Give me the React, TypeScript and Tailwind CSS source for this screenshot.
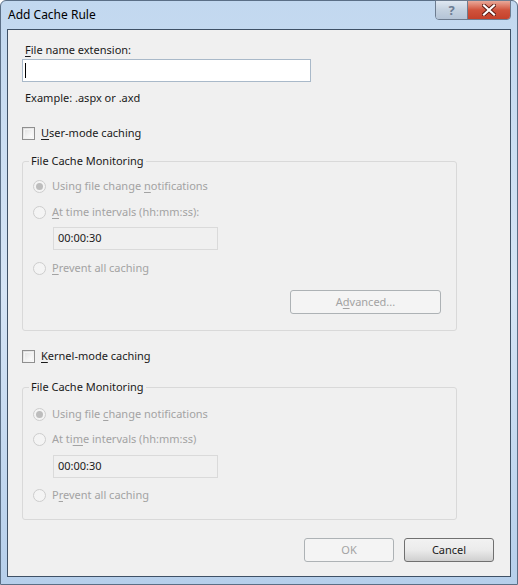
import React from "react";

const font = { fontFamily: '"Noto Sans", "Open Sans", sans-serif' };

function U({ children }: { children: React.ReactNode }) {
  return <span className="underline underline-offset-2 decoration-1">{children}</span>;
}

function Checkbox({ label }: { label: React.ReactNode }) {
  return (
    <div className="flex h-[16px] items-center gap-[6px]">
      <div className="h-[13px] w-[13px] border border-[#8f8f8f] bg-gradient-to-br from-[#dcdcdc] to-[#fbfbfb] p-[1px]">
        <div className="h-full w-full border border-[#f4f4f4] bg-gradient-to-br from-[#e4e4e4] to-[#fdfdfd]" />
      </div>
      <span className="text-[11px] leading-[16px] text-[#1a1a1a]">{label}</span>
    </div>
  );
}

function Radio({ label, checked, className = "" }: { label: React.ReactNode; checked?: boolean; className?: string }) {
  return (
    <div className={`flex h-[16px] items-center gap-[6px] ${className}`}>
      <div className="flex h-[13px] w-[13px] items-center justify-center rounded-full border border-[#cdcdcd] bg-[#f4f4f4]">
        {checked && <div className="h-[7px] w-[7px] rounded-full bg-[#bdbdbd]" />}
      </div>
      <span className="text-[11px] leading-[16px] text-[#a3a3a3]">{label}</span>
    </div>
  );
}

function TimeInput({ className = "" }: { className?: string }) {
  return (
    <div className={`ml-[20px] flex h-[23px] w-[165px] items-center border border-[#dadada] bg-[#f0f0f0] px-[4px] text-[11px] text-[#1a1a1a] ${className}`}>
      00:00:30
    </div>
  );
}

function Group({ children }: { children: React.ReactNode }) {
  return (
    <fieldset className="w-[435px] rounded-[3px] border border-[#d9d9d9] px-[10px] pb-[16px]">
      <legend className="ml-[-4px] px-[2px] text-[11px] leading-[16px] text-[#1a1a1a]">File Cache Monitoring</legend>
      {children}
    </fieldset>
  );
}

export default function App() {
  return (
    <div style={font} className="h-[585px] w-[518px] overflow-hidden bg-white">
      <div className="flex h-full w-full flex-col rounded-t-[6px] border border-[#5b6f86] bg-gradient-to-b from-[#c2d8ef] via-[#d5e4f5] to-[#b6cfeb]">
        {/* title bar */}
        <div className="flex h-[28px] shrink-0 items-start justify-between pl-[7px] pr-[6px]">
          <span className="mt-[6px] text-[12px] leading-[16px] text-black">Add Cache Rule</span>
          <div className="flex h-[20px] -mt-[1px] overflow-hidden rounded-b-[4px] border border-[#6d7c8f]">
            <div className="flex w-[31px] items-center justify-center bg-gradient-to-b from-[#dfe7f1] via-[#c4d1df] to-[#b4c4d6] text-[13px] font-bold leading-none text-[#6b7c93]">?</div>
            <div className="flex w-[43px] items-center justify-center border-l border-[#6d7c8f] bg-gradient-to-b from-[#e9a899] via-[#d0533c] to-[#c4412b]">
              <svg width="14" height="12" viewBox="0 0 14 12">
                <path d="M2 1.5 L12 10.5 M12 1.5 L2 10.5" stroke="#5a1a12" strokeWidth="4" strokeLinecap="square" />
                <path d="M2 1.5 L12 10.5 M12 1.5 L2 10.5" stroke="#ffffff" strokeWidth="2.2" strokeLinecap="square" />
              </svg>
            </div>
          </div>
        </div>
        {/* client area */}
        <div className="mx-[6px] mb-[7px] flex flex-1 flex-col border border-[#3f5166] bg-[#f0f0f0] pl-[14px] pt-[12px]">
          <span className="pl-[3px] text-[11px] leading-[16px] text-[#1a1a1a]"><U>F</U>ile name extension:</span>
          <div className="mt-[1px] flex h-[23px] w-[289px] items-center border border-[#a9b9c9] bg-white px-[2px]">
            <div className="h-[15px] w-[1px] bg-black" />
          </div>
          <span className="mt-[8px] pl-[3px] text-[11px] leading-[16px] text-[#1a1a1a]">Example: .aspx or .axd</span>

          <div className="mt-[19px]">
            <Checkbox label={<><U>U</U>ser-mode caching</>} />
          </div>

          <div className="mt-[12px]">
            <Group>
              <Radio className="mt-[9px]" checked label={<>Using file change <U>n</U>otifications</>} />
              <Radio className="mt-[10px]" label={<><U>A</U>t time intervals (hh:mm:ss):</>} />
              <TimeInput className="mt-[7px]" />
              <Radio className="mt-[10px]" label={<><U>P</U>revent all caching</>} />
              <div className="mt-[14px] flex justify-end pr-[5px]">
                <div className="flex h-[24px] w-[151px] items-center justify-center rounded-[3px] border border-[#adb2b5] bg-[#f4f4f4] text-[11px] text-[#a3a3a3]">
                  A<U>d</U>vanced...
                </div>
              </div>
            </Group>
          </div>

          <div className="mt-[17px]">
            <Checkbox label={<><U>K</U>ernel-mode caching</>} />
          </div>

          <div className="mt-[15px]">
            <Group>
              <Radio className="mt-[11px]" checked label={<>Using file <U>c</U>hange notifications</>} />
              <Radio className="mt-[9px]" label={<>At ti<U>m</U>e intervals (hh:mm:ss)</>} />
              <TimeInput className="mt-[8px]" />
              <Radio className="mt-[9px]" label={<>P<U>r</U>event all caching</>} />
            </Group>
          </div>

          <div className="mt-[18px] flex justify-end gap-[10px] pr-[16px]">
            <div className="flex h-[24px] w-[90px] items-center justify-center rounded-[3px] border border-[#adb2b5] bg-[#f4f4f4] text-[11px] text-[#a3a3a3]">OK</div>
            <div className="flex h-[24px] w-[90px] items-center justify-center rounded-[3px] border border-[#707070] bg-gradient-to-b from-[#f2f2f2] via-[#ebebeb] to-[#cfcfcf] text-[11px] text-[#1a1a1a]">Cancel</div>
          </div>
        </div>
      </div>
    </div>
  );
}
